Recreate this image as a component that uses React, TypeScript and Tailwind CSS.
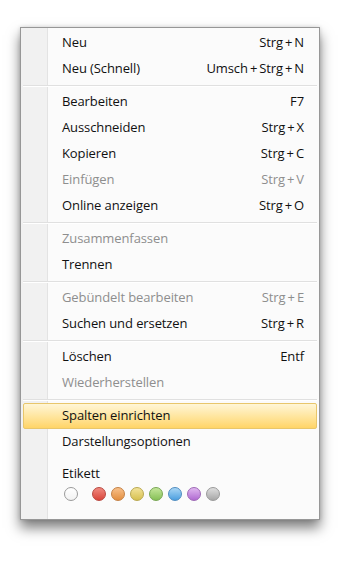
import React from "react";

type Item =
  | { type: "item"; label: string; shortcut?: string; disabled?: boolean; active?: boolean }
  | { type: "sep" };

const items: Item[] = [
  { type: "item", label: "Neu", shortcut: "Strg+N" },
  { type: "item", label: "Neu (Schnell)", shortcut: "Umsch+Strg+N" },
  { type: "sep" },
  { type: "item", label: "Bearbeiten", shortcut: "F7" },
  { type: "item", label: "Ausschneiden", shortcut: "Strg+X" },
  { type: "item", label: "Kopieren", shortcut: "Strg+C" },
  { type: "item", label: "Einfügen", shortcut: "Strg+V", disabled: true },
  { type: "item", label: "Online anzeigen", shortcut: "Strg+O" },
  { type: "sep" },
  { type: "item", label: "Zusammenfassen", disabled: true },
  { type: "item", label: "Trennen" },
  { type: "sep" },
  { type: "item", label: "Gebündelt bearbeiten", shortcut: "Strg+E", disabled: true },
  { type: "item", label: "Suchen und ersetzen", shortcut: "Strg+R" },
  { type: "sep" },
  { type: "item", label: "Löschen", shortcut: "Entf" },
  { type: "item", label: "Wiederherstellen", disabled: true },
  { type: "sep" },
  { type: "item", label: "Spalten einrichten", active: true },
  { type: "item", label: "Darstellungsoptionen" },
];

const colors = [
  { from: "#f08a80", to: "#d9453a", border: "#b9473f" },
  { from: "#f8c08a", to: "#e38e3f", border: "#c48043" },
  { from: "#f3e39a", to: "#d6c04f", border: "#b9a84e" },
  { from: "#c4e69a", to: "#86c056", border: "#77a652" },
  { from: "#a9d6f5", to: "#4c9fe0", border: "#4e8cc0" },
  { from: "#e0b7f0", to: "#b06ad2", border: "#9d68b5" },
  { from: "#dedede", to: "#a7a7a7", border: "#999999" },
];

function Shortcut({ text }: { text: string }) {
  const parts = text.split("+");
  return (
    <span className="flex items-center">
      {parts.map((p, i) => (
        <React.Fragment key={i}>
          {i > 0 && <span className="px-[2px]">+</span>}
          <span>{p}</span>
        </React.Fragment>
      ))}
    </span>
  );
}

export default function App() {
  return (
    <div className="w-[356px] h-[569px] bg-white" style={{ fontFamily: '"Open Sans", "Noto Sans", sans-serif' }}>
      <div className="pt-[27px] pl-[20px]">
        <div className="relative w-[300px] h-[493px] border border-[#979797] bg-[#fbfbfb] shadow-[0_8px_12px_rgba(0,0,0,0.5),0_0_4px_rgba(0,0,0,0.15)]">
          {/* gutter */}
          <div className="absolute left-0 top-0 bottom-0 w-[27px] bg-[#f1f1f1] border-r border-[#e3e3e3]" />
          <div className="relative flex flex-col pt-[2px] px-[2px]">
            {items.map((it, i) =>
              it.type === "sep" ? (
                <div key={i} className="h-[7px] flex items-center">
                  <div className="w-full h-[1px] bg-[#e0e0e0] border-b border-white box-content" />
                </div>
              ) : (
                <div
                  key={i}
                  className={
                    "h-[26px] flex items-center justify-between pl-[38px] pr-[12px] text-[13px] tracking-[-0.1px] " +
                    (it.active
                      ? "bg-gradient-to-b from-[#fff6d6] via-[#ffe6a0] to-[#ffd466] border border-[#e8c66b] rounded-[2px] text-[#111]"
                      : it.disabled
                      ? "text-[#8e8e8e] border border-transparent"
                      : "text-[#111] border border-transparent")
                  }
                >
                  <span>{it.label}</span>
                  {it.shortcut && <Shortcut text={it.shortcut} />}
                </div>
              )
            )}
            <div className="pl-[39px] pt-[10px] text-[13px] tracking-[-0.1px] text-[#111] leading-[16px]">Etikett</div>
            <div className="pl-[41px] pt-[6px] flex items-center">
              <div className="w-[14px] h-[14px] rounded-full border border-[#9a9a9a] bg-gradient-to-b from-white to-[#f2f2f2]" />
              <div className="ml-[14px] flex gap-[5px]">
                {colors.map((c, i) => (
                  <div
                    key={i}
                    className="w-[14px] h-[14px] rounded-full"
                    style={{
                      background: `linear-gradient(to bottom, ${c.from}, ${c.to})`,
                      border: `1px solid ${c.border}`,
                    }}
                  />
                ))}
              </div>
            </div>
          </div>
        </div>
      </div>
    </div>
  );
}
